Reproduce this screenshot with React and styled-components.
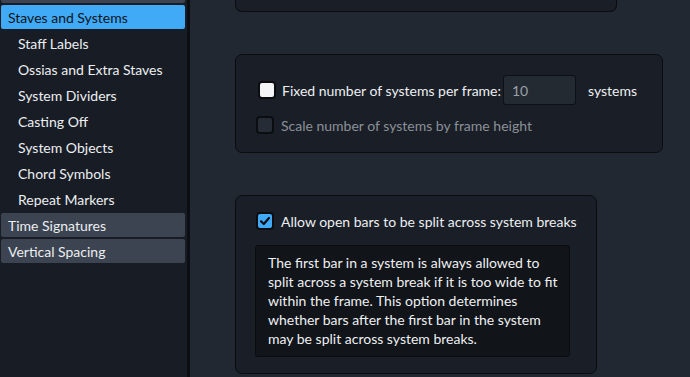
import React from "react";
import styled, { createGlobalStyle } from "styled-components";

const GlobalStyle = createGlobalStyle`
  html, body {
    margin: 0;
    padding: 0;
    background: #222831;
    overflow: hidden;
  }
  body {
    font-family: "Lato", "Noto Sans", sans-serif;
    font-size: 14px;
    color: #e9ebee;
  }
`;

const Page = styled.div`
  display: flex;
  height: 377px;
  width: 690px;
  overflow: hidden;
`;

const Sidebar = styled.nav`
  width: 190px;
  flex-shrink: 0;
  background: #181d25;
  border-right: 3px solid #0b0e12;
  padding-left: 1px;
  box-sizing: border-box;
  display: flex;
  flex-direction: column;
`;

const Stub = styled.div`
  height: 3px;
  width: 184px;
  background: #3b4450;
  border-radius: 0 0 2px 2px;
  margin-bottom: 2px;
`;

const GroupItem = styled.div`
  height: 24px;
  width: 184px;
  box-sizing: border-box;
  padding-left: 7px;
  display: flex;
  align-items: center;
  border-radius: 2px;
  margin-bottom: 2px;
  background: ${(p) => (p.$active ? "#40aaf6" : "#3b4450")};
  color: ${(p) => (p.$active ? "#0f141b" : "#eceef1")};
`;

const SubList = styled.div`
  display: flex;
  flex-direction: column;
  margin: -1px 0 1px;
`;

const SubItem = styled.div`
  height: 26px;
  padding-left: 17px;
  display: flex;
  align-items: center;
  color: #eceef1;
`;

const Main = styled.main`
  flex: 1;
  display: flex;
  flex-direction: column;
  align-items: flex-start;
  gap: 42px;
  padding-left: 45px;
`;

const Panel = styled.section`
  width: ${(p) => p.$width}px;
  box-sizing: border-box;
  background: #1a1f27;
  border: 1px solid #0a0c0f;
  border-radius: 7px;
`;

const CutPanel = styled(Panel)`
  height: 12px;
  border-top: none;
  border-radius: 0 0 7px 7px;
`;

const FramePanel = styled(Panel)`
  padding: 20px 10px 18px 20px;
  display: flex;
  flex-direction: column;
  gap: 11px;
`;

const SplitPanel = styled(Panel)`
  padding: 16px 10px 16px 19px;
  display: flex;
  flex-direction: column;
  gap: 15px;
`;

const Row = styled.label`
  display: flex;
  align-items: center;
  margin-left: ${(p) => p.$shift || 0}px;
  white-space: nowrap;
  color: ${(p) => (p.$disabled ? "#8b9098" : "#eceef1")};
`;

const Box = styled.span`
  width: 18px;
  height: 18px;
  box-sizing: border-box;
  margin-right: ${(p) => p.$gap}px;
  border-radius: 4px;
  border: 2px solid #0b0d10;
  display: inline-flex;
  align-items: center;
  justify-content: center;
  flex-shrink: 0;
  background: ${(p) =>
    p.$state === "on" ? "#40aaf6" : p.$state === "white" ? "#f4f5f6" : "#262c35"};
`;

const NumberInput = styled.div`
  width: 73px;
  height: 30px;
  box-sizing: border-box;
  margin-left: 2px;
  padding-left: 8px;
  flex-shrink: 0;
  display: flex;
  align-items: center;
  background: #232a32;
  border: 1px solid #0d1014;
  border-radius: 3px;
  color: #9aa0a8;
`;

const Unit = styled.span`
  margin-left: 12px;
  color: #eceef1;
`;

const Description = styled.div`
  width: 315px;
  box-sizing: border-box;
  padding: 7px 12px 8px;
  background: #111419;
  border: 1px solid #0a0c0f;
  border-radius: 3px;
  line-height: 19px;
  color: #eef0f2;
  white-space: nowrap;
`;

function Check({ state, gap = 7 }) {
  return (
    <Box $state={state} $gap={gap}>
      {state === "on" && (
        <svg width="12" height="12" viewBox="0 0 12 12">
          <path
            d="M2 6.3 L4.8 9 L10 3"
            fill="none"
            stroke="#0b0d10"
            strokeWidth="2.2"
            strokeLinecap="round"
            strokeLinejoin="round"
          />
        </svg>
      )}
    </Box>
  );
}

const subs = [
  "Staff Labels",
  "Ossias and Extra Staves",
  "System Dividers",
  "Casting Off",
  "System Objects",
  "Chord Symbols",
  "Repeat Markers",
];

export default function App() {
  return (
    <>
      <GlobalStyle />
      <Page>
        <Sidebar>
          <Stub />
          <GroupItem $active>Staves and Systems</GroupItem>
          <SubList>
            {subs.map((s) => (
              <SubItem key={s}>{s}</SubItem>
            ))}
          </SubList>
          <GroupItem>Time Signatures</GroupItem>
          <GroupItem>Vertical Spacing</GroupItem>
        </Sidebar>
        <Main>
          <CutPanel $width={382} />
          <FramePanel $width={428}>
            <Row $shift={2}>
              <Check state="white" gap={6} />
              Fixed number of systems per frame:
              <NumberInput>10</NumberInput>
              <Unit>systems</Unit>
            </Row>
            <Row $disabled>
              <Check state="off" />
              Scale number of systems by frame height
            </Row>
          </FramePanel>
          <SplitPanel $width={362}>
            <Row $shift={1}>
              <Check state="on" />
              Allow open bars to be split across system breaks
            </Row>
            <Description>
              The first bar in a system is always allowed to
              <br />
              split across a system break if it is too wide to fit
              <br />
              within the frame. This option determines
              <br />
              whether bars after the first bar in the system
              <br />
              may be split across system breaks.
            </Description>
          </SplitPanel>
        </Main>
      </Page>
    </>
  );
}
